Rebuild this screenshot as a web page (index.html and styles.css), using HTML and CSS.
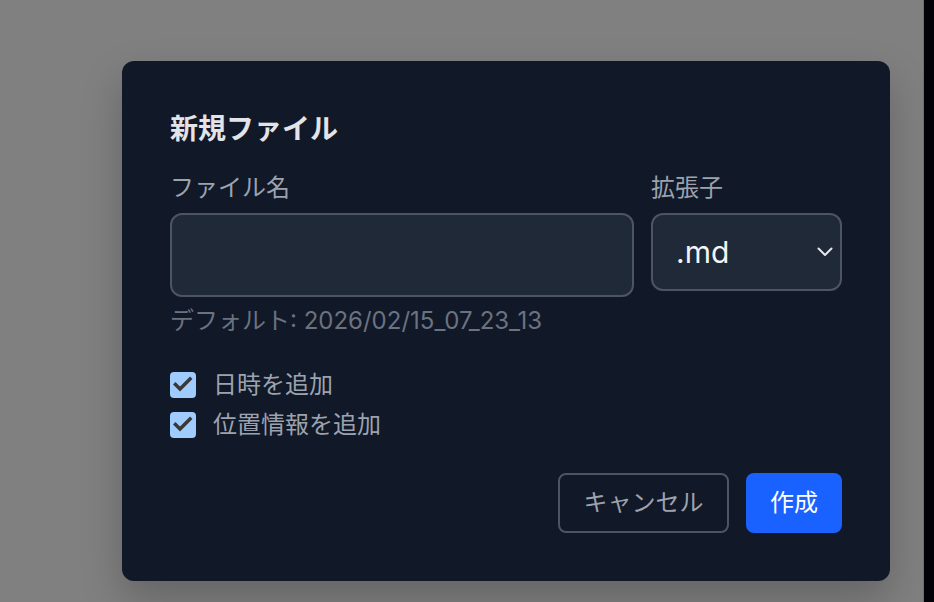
FILE: index.html
```html
<!DOCTYPE html>
<html lang="ja">
<head>
<meta charset="utf-8">
<title>新規ファイル</title>
<link rel="stylesheet" href="styles.css">
</head>
<body>
<div class="screen">
  <div class="backdrop">
    <div class="dialog" role="dialog">
      <h2 class="title">新規ファイル</h2>
      <div class="fields">
        <div class="field field-name">
          <label class="label">ファイル名</label>
          <input class="input" type="text">
        </div>
        <div class="field field-ext">
          <label class="label">拡張子</label>
          <div class="select">
            <span class="select-value">.md</span>
            <svg class="chevron" width="16" height="10" viewBox="0 0 16 10"><path d="M1.5 1.5 L8 8 L14.5 1.5" fill="none" stroke="#e5e7eb" stroke-width="2" stroke-linecap="round" stroke-linejoin="round"/></svg>
          </div>
        </div>
      </div>
      <p class="hint">デフォルト: 2026/02/15_07_23_13</p>
      <div class="checks">
        <label class="check">
          <span class="box"><svg width="26" height="26" viewBox="0 0 26 26"><path d="M5.5 12.5 L10 17 L20 7" fill="none" stroke="#383838" stroke-width="3.5" stroke-linecap="square"/></svg></span>
          <span class="check-text">日時を追加</span>
        </label>
        <label class="check">
          <span class="box"><svg width="26" height="26" viewBox="0 0 26 26"><path d="M5.5 12.5 L10 17 L20 7" fill="none" stroke="#383838" stroke-width="3.5" stroke-linecap="square"/></svg></span>
          <span class="check-text">位置情報を追加</span>
        </label>
      </div>
      <div class="actions">
        <button class="btn btn-cancel">キャンセル</button>
        <button class="btn btn-primary">作成</button>
      </div>
    </div>
  </div>
  <div class="scrollbar"></div>
</div>
</body>
</html>
```
FILE: styles.css
```css
* { box-sizing: border-box; }
html, body {
  margin: 0;
  padding: 0;
  height: 100%;
}
body {
  font-family: Inter, "Noto Sans CJK JP", sans-serif;
  background: #808080;
  overflow: hidden;
}
.screen {
  display: flex;
  width: 934px;
  height: 602px;
}
.backdrop {
  flex: 1;
  background: #808080;
  padding: 61px 0 0 122px;
}
.scrollbar {
  width: 11px;
  background: #020208;
  border-left: 1px solid #6f6f6f;
}
.dialog {
  width: 768px;
  height: 520px;
  background: #111827;
  border-radius: 12px;
  padding: 48px;
  box-shadow: 0 18px 40px rgba(0, 0, 0, 0.22);
  display: flex;
  flex-direction: column;
}
.title {
  margin: 0 0 23px;
  font-size: 28px;
  line-height: 40px;
  font-weight: 700;
  color: #e2e4e9;
}
.fields {
  display: flex;
  gap: 17px;
  align-items: flex-start;
}
.field {
  display: flex;
  flex-direction: column;
}
.field-name { flex: 1; }
.field-ext { width: 191px; }
.label {
  font-size: 24px;
  line-height: 32px;
  color: #9ca3af;
  margin-bottom: 9px;
}
.input {
  height: 84px;
  background: #1f2937;
  border: 2px solid #4b5563;
  border-radius: 12px;
  outline: none;
  font: inherit;
}
.select {
  height: 78px;
  background: #1f2937;
  border: 2px solid #4b5563;
  border-radius: 12px;
  display: flex;
  align-items: center;
  justify-content: space-between;
  padding: 0 7px 0 23px;
}
.select-value {
  font-size: 30px;
  color: #f3f4f6;
  line-height: 1;
  padding-bottom: 1px;
}
.chevron { display: block; }
.hint {
  margin: 8px 0 0;
  font-size: 24px;
  line-height: 32px;
  color: #6b7280;
}
.checks {
  margin-top: 32px;
  display: flex;
  flex-direction: column;
  gap: 8px;
}
.check {
  display: flex;
  align-items: center;
  height: 32px;
}
.box {
  width: 26px;
  height: 26px;
  border-radius: 4px;
  background: #9fcbff;
  display: block;
}
.box svg { display: block; }
.check-text {
  margin-left: 17px;
  font-size: 24px;
  line-height: 32px;
  color: #9ca3af;
}
.actions {
  margin-top: 32px;
  display: flex;
  justify-content: flex-end;
  gap: 17px;
}
.btn {
  height: 60px;
  border-radius: 8px;
  font-family: inherit;
  font-size: 24px;
  line-height: 1;
  padding: 0;
  white-space: nowrap;
  cursor: pointer;
}
.btn-cancel {
  background: transparent;
  border: 2px solid #4b5563;
  color: #9ca3af;
  width: 171px;
}
.btn-primary {
  background: #1a62ff;
  border: none;
  color: #ffffff;
  width: 96px;
}
```
